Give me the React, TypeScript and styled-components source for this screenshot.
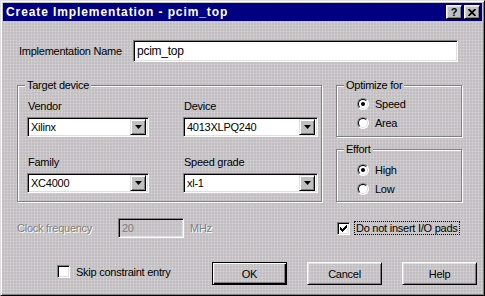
import React from "react";
import styled, { createGlobalStyle, css } from "styled-components";

const Global = createGlobalStyle`
  html, body { margin: 0; padding: 0; background: #c0c0c0; }
  body {
    font-family: "Liberation Sans", Arial, sans-serif;
    font-size: 11px;
    letter-spacing: -0.25px;
    color: #000;
  }
  * { box-sizing: border-box; }
`;

const dither = css`
  background-color: #c0c0c0;
  background-image: radial-gradient(circle at 1.5px 1.5px, #dad0da 0.85px, transparent 1.1px);
  background-size: 3px 3px;
  background-attachment: fixed;
`;

const sunken = css`
  border: 1px solid;
  border-color: #808080 #fff #fff #808080;
  box-shadow: inset 1px 1px #000, inset -1px -1px #dfdfdf;
`;

const raised = css`
  border: 1px solid;
  border-color: #fff #000 #000 #fff;
  box-shadow: inset 1px 1px #dfdfdf, inset -1px -1px #808080;
`;

const Window = styled.div`
  width: 485px;
  height: 296px;
  ${dither};
  border: 1px solid;
  border-color: #dfdfdf #000 #000 #dfdfdf;
  box-shadow: inset 1px 1px #fff, inset -1px -1px #808080;
  padding: 2px;
  display: flex;
  flex-direction: column;
`;

const TitleBar = styled.div`
  height: 18px;
  background: #000080;
  display: flex;
  align-items: center;
  padding: 0 2px 0 3px;
`;

const TitleText = styled.div`
  flex: 1;
  color: #fff;
  font-weight: bold;
  font-size: 12px;
  letter-spacing: 0.9px;
`;

const TitleButton = styled.div`
  width: 16px;
  height: 14px;
  ${raised};
  background: #c0c0c0;
  display: flex;
  align-items: center;
  justify-content: center;
  font-weight: bold;
  font-size: 11px;
  line-height: 1;
  margin-left: 2px;
`;

const Body = styled.div`
  display: flex;
  flex-direction: column;
  padding-left: 14px;
`;

const NameRow = styled.div`
  display: flex;
  align-items: center;
  margin-top: 19px;
`;

const NameLabel = styled.div`
  width: 114px;
  margin-left: 2px;
`;

const TextField = styled.div<{ $w: number; $h: number; $disabled?: boolean }>`
  width: ${(p) => p.$w}px;
  height: ${(p) => p.$h}px;
  ${sunken};
  background: #fff;
  ${(p) => p.$disabled && dither};
  color: ${(p) => (p.$disabled ? "#808080" : "#000")};
  display: flex;
  align-items: center;
  padding-left: 3px;
  font-size: ${(p) => (p.$disabled ? "11px" : "12px")};
`;

const MainRow = styled.div`
  display: flex;
  gap: 14px;
  margin-top: 23px;
`;

const GroupBox = styled.div<{ $w: number; $h: number }>`
  position: relative;
  width: ${(p) => p.$w}px;
  height: ${(p) => p.$h}px;
  border: 1px solid #808080;
  box-shadow: inset 1px 1px #fff, 1px 1px #fff;
`;

const Legend = styled.div`
  position: absolute;
  top: -7px;
  left: 7px;
  padding: 0 2px;
  line-height: 13px;
  ${dither};
`;

const DeviceGrid = styled.div`
  display: grid;
  grid-template-columns: 122px 135px;
  column-gap: 34px;
  row-gap: 19px;
  padding: 14px 0 0 9px;
`;

const Field = styled.div`
  display: flex;
  flex-direction: column;
  gap: 4px;
`;

const FieldLabel = styled.div`
  line-height: 13px;
  margin-left: 1px;
`;

const Combo = styled.div`
  height: 20px;
  ${sunken};
  background: #fff;
  display: flex;
  align-items: center;
  padding: 2px 2px 2px 3px;
`;

const ComboText = styled.div`
  flex: 1;
`;

const ArrowButton = styled.div`
  width: 16px;
  height: 16px;
  ${raised};
  border-color: #dfdfdf #000 #000 #dfdfdf;
  box-shadow: inset 1px 1px #fff, inset -1px -1px #808080;
  background: #c0c0c0;
  display: flex;
  align-items: center;
  justify-content: center;
`;

const RightCol = styled.div`
  display: flex;
  flex-direction: column;
  gap: 12px;
`;

const RadioList = styled.div<{ $top: number }>`
  display: flex;
  flex-direction: column;
  padding: ${(p) => p.$top}px 0 0 20px;
`;

const RadioRow = styled.div`
  height: 19px;
  display: flex;
  align-items: center;
  gap: 6px;
`;

const RadioCircle = styled.div<{ $checked?: boolean }>`
  position: relative;
  width: 12px;
  height: 12px;
  border-radius: 50%;
  border: 1px solid;
  border-color: #808080 #fff #fff #808080;
  background: #fff;
  &::before {
    content: "";
    position: absolute;
    inset: 0;
    border-radius: 50%;
    border: 1px solid;
    border-color: #000 #dfdfdf #dfdfdf #000;
  }
  &::after {
    content: "";
    display: ${(p) => (p.$checked ? "block" : "none")};
    position: absolute;
    left: 3px;
    top: 3px;
    width: 4px;
    height: 4px;
    border-radius: 50%;
    background: #000;
  }
`;

const OptionRow = styled.div`
  display: flex;
  align-items: center;
  height: 20px;
  margin-top: 16px;
`;

const ClockArea = styled.div`
  width: 319px;
  display: flex;
  align-items: center;
`;

const DisabledLabel = styled.div<{ $w?: number }>`
  color: #808080;
  text-shadow: 1px 1px 0 #fff;
  width: ${(p) => (p.$w ? `${p.$w}px` : "auto")};
`;

const Unit = styled(DisabledLabel)`
  margin-left: 6px;
`;

const CheckRow = styled.div<{ $ml: number }>`
  display: flex;
  align-items: center;
  gap: 5px;
  margin-left: ${(p) => p.$ml}px;
`;

const CheckBox = styled.div`
  width: 13px;
  height: 13px;
  ${sunken};
  background: #fff;
  display: flex;
  align-items: center;
  justify-content: center;
`;

const CheckText = styled.div<{ $focus?: boolean }>`
  line-height: 12px;
  padding: 0 1px;
  outline: ${(p) => (p.$focus ? "1px dotted #000" : "none")};
`;

const ButtonRow = styled.div`
  display: flex;
  align-items: flex-start;
  margin-top: 24px;
`;

const SkipArea = styled.div`
  width: 155px;
  margin-left: 40px;
  padding-top: 3px;
`;

const Buttons = styled.div`
  display: flex;
  gap: 20px;
`;

const Button = styled.div<{ $default?: boolean }>`
  width: 75px;
  height: 23px;
  display: flex;
  align-items: center;
  justify-content: center;
  ${dither};
  ${raised};
  ${(p) =>
    p.$default &&
    css`
      border: 1px solid #000;
      box-shadow: inset 1px 1px #fff, inset -1px -1px #000, inset -2px -2px #808080;
    `}
`;

const Arrow = () => (
  <svg width="7" height="4" viewBox="0 0 7 4">
    <polygon points="0,0 7,0 3.5,4" fill="#000" />
  </svg>
);

const Check = () => (
  <svg width="7" height="7" viewBox="0 0 7 7" shapeRendering="crispEdges">
    <path d="M0 2 L2 4 L7 -1 L7 2 L2 7 L0 5 Z" fill="#000" />
  </svg>
);

const CloseGlyph = () => (
  <svg width="8" height="7" viewBox="0 0 8 7">
    <path d="M0.5 0 L7.5 7 M7.5 0 L0.5 7" stroke="#000" strokeWidth="1.8" fill="none" />
  </svg>
);

const ComboBox = ({ value }: { value: string }) => (
  <Combo>
    <ComboText>{value}</ComboText>
    <ArrowButton>
      <Arrow />
    </ArrowButton>
  </Combo>
);

const Radio = ({ label, checked }: { label: string; checked?: boolean }) => (
  <RadioRow>
    <RadioCircle $checked={checked} />
    <span>{label}</span>
  </RadioRow>
);

export default function App() {
  return (
    <>
      <Global />
      <Window>
        <TitleBar>
          <TitleText>Create Implementation - pcim_top</TitleText>
          <TitleButton>?</TitleButton>
          <TitleButton>
            <CloseGlyph />
          </TitleButton>
        </TitleBar>
        <Body>
          <NameRow>
            <NameLabel>Implementation Name</NameLabel>
            <TextField $w={325} $h={22}>pcim_top</TextField>
          </NameRow>
          <MainRow>
            <GroupBox $w={305} $h={117}>
              <Legend>Target device</Legend>
              <DeviceGrid>
                <Field>
                  <FieldLabel>Vendor</FieldLabel>
                  <ComboBox value="Xilinx" />
                </Field>
                <Field>
                  <FieldLabel>Device</FieldLabel>
                  <ComboBox value="4013XLPQ240" />
                </Field>
                <Field>
                  <FieldLabel>Family</FieldLabel>
                  <ComboBox value="XC4000" />
                </Field>
                <Field>
                  <FieldLabel>Speed grade</FieldLabel>
                  <ComboBox value="xl-1" />
                </Field>
              </DeviceGrid>
            </GroupBox>
            <RightCol>
              <GroupBox $w={126} $h={52}>
                <Legend>Optimize for</Legend>
                <RadioList $top={8}>
                  <Radio label="Speed" checked />
                  <Radio label="Area" />
                </RadioList>
              </GroupBox>
              <GroupBox $w={126} $h={53}>
                <Legend>Effort</Legend>
                <RadioList $top={10}>
                  <Radio label="High" checked />
                  <Radio label="Low" />
                </RadioList>
              </GroupBox>
            </RightCol>
          </MainRow>
          <OptionRow>
            <ClockArea>
              <DisabledLabel $w={101}>Clock frequency</DisabledLabel>
              <TextField $w={66} $h={20} $disabled>
                20
              </TextField>
              <Unit>MHz</Unit>
            </ClockArea>
            <CheckRow $ml={1}>
              <CheckBox>
                <Check />
              </CheckBox>
              <CheckText $focus>Do not insert I/O pads</CheckText>
            </CheckRow>
          </OptionRow>
          <ButtonRow>
            <SkipArea>
              <CheckRow $ml={0}>
                <CheckBox />
                <CheckText>Skip constraint entry</CheckText>
              </CheckRow>
            </SkipArea>
            <Buttons>
              <Button $default>OK</Button>
              <Button>Cancel</Button>
              <Button>Help</Button>
            </Buttons>
          </ButtonRow>
        </Body>
      </Window>
    </>
  );
}
